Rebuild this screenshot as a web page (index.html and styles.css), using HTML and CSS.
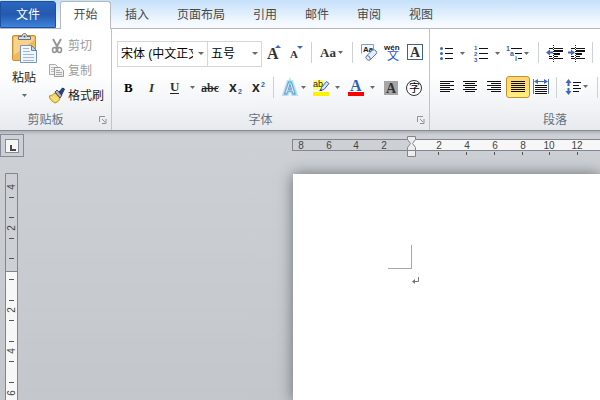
FILE: index.html
```html
<!DOCTYPE html>
<html lang="zh-CN">
<head>
<meta charset="utf-8">
<title>文档</title>
<link rel="stylesheet" href="styles.css">
</head>
<body>
<nav class="tabs">
  <button class="tab file">文件</button>
  <button class="tab active">开始</button>
  <button class="tab">插入</button>
  <button class="tab">页面布局</button>
  <button class="tab">引用</button>
  <button class="tab">邮件</button>
  <button class="tab">审阅</button>
  <button class="tab">视图</button>
</nav>

<div class="ribbon">
  <section class="group clipboard">
    <div class="clip-tools">
      <button class="paste">
        <svg width="28" height="31" viewBox="0 0 28 31">
          <rect x="2.500" y="2.500" width="23" height="25" rx="1.500" fill="#f0b95a" stroke="#c98f35"/>
          <path d="M4 4h20v3L4 22z" fill="#f8d28b"/>
          <path d="M8.500 6.500v-3h3.500c0-2 1-3 2.500-3s2.500 1 2.500 3h3.500v3z" fill="#d9dde2" stroke="#697079"/>
          <circle cx="14.500" cy="3.500" r="1" fill="#555"/>
          <path d="M10.500 12.500h11l5 5v12h-16z" fill="#f1f6fd" stroke="#7795bb"/>
          <path d="M21.500 12.500v5h5z" fill="#c5d7ee" stroke="#5c81b5"/>
          <path d="M13 15.500h6M13 18.500h7M13 21.500h11M13 24.500h11M13 27.500h11" stroke="#9db7d9"/>
        </svg>
        <span>粘贴</span>
        <svg class="drop" width="5" height="3" viewBox="0 0 5 3"><path d="M0 0h5l-2.500 3z"/></svg>
      </button>
      <div class="clip-list">
        <button class="line" disabled>
          <svg width="16" height="18" viewBox="0 0 16 18">
            <path d="M4 2l5 9M12 2L7 11" fill="none" stroke="#979797" stroke-width="2"/>
            <ellipse cx="5.500" cy="13" rx="2" ry="2.500" fill="none" stroke="#939393" stroke-width="1.500"/>
            <ellipse cx="10.500" cy="13" rx="2" ry="2.500" fill="none" stroke="#939393" stroke-width="1.500"/>
          </svg>剪切</button>
        <button class="line" disabled>
          <svg width="16" height="18" viewBox="0 0 16 18">
            <path d="M.5 2.500h6l2 2v8h-8z" fill="#f3f3f3" stroke="#aaa"/>
            <path d="M2 5.500h4M2 7.500h4M2 9.500h3" stroke="#bbb"/>
            <path d="M5.500 5.500h6l3 3v6h-9z" fill="#f0f0f0" stroke="#9a9a9a"/>
            <path d="M7 8.500h4M7 10.500h6M7 12.500h6" stroke="#aaa"/>
          </svg>复制</button>
        <button class="line">
          <svg width="16" height="18" viewBox="0 0 16 18">
            <path d="M0 9c3 0 4-2 6-3l5 5c-1 3-2 4-5 5-2-1-5-3-6-7z" fill="#f2d35e" stroke="#b6912e"/>
            <path d="M2 10l5 4M4 9l5 4" stroke="#fff2ad"/>
            <path d="M6 5l2-2 5 5-2 3z" fill="#a9b2c0" stroke="#4a5365"/>
            <path d="M10 5l3.500-4 2 1-3 6z" fill="#28458a" stroke="#263462"/>
          </svg>格式刷</button>
      </div>
    </div>
    <footer class="caption"><span>剪贴板</span>
      <button class="launcher" aria-label="剪贴板选项"><svg width="8" height="8" viewBox="0 0 8 8"><path d="M.5 6V.5H6M3 3l3 3M7 3v4.500H3" /></svg></button>
    </footer>
  </section>

  <section class="group font">
    <div class="rows">
      <div class="row">
        <span class="combo name"><select aria-label="字体"><option>宋体 (中文正文)</option></select></span>
        <span class="combo size"><select aria-label="字号"><option>五号</option></select></span>
        <button class="tool" aria-label="增大字体"><svg width="24" height="24" viewBox="0 0 24 24"><text class="serif s16" x="5" y="18">A</text><path class="blue" d="M13 7h6l-3-3z"/></svg></button>
        <button class="tool" aria-label="缩小字体"><svg width="20" height="24" viewBox="0 0 20 24"><text class="serif s11" x="4" y="17">A</text><path class="blue" d="M11 5h6l-3 3z"/></svg></button>
        <svg class="sep" width="9" height="24" viewBox="0 0 9 24"><path d="M5.500 1v21"/></svg>
        <button class="tool" aria-label="更改大小写"><svg width="33" height="24" viewBox="0 0 33 24"><text class="serif s13" x="5" y="16">Aa</text><path class="arrow" d="M23 10h5l-2.500 3z"/></svg></button>
        <svg class="sep" width="9" height="24" viewBox="0 0 9 24"><path d="M4.500 1v21"/></svg>
        <button class="tool" aria-label="清除格式"><svg width="24" height="24" viewBox="0 0 24 24"><path d="M4.500 12.500v-9h12v7" fill="#f3f7fc" stroke="#7c9fcb"/><text class="sans s8" x="6" y="11">Aa</text><path d="M9.500 15l6-6q2-1 3.500 1t0 3l-6 6q-2 1-3.500-1t0-3z" fill="#e5edf8" stroke="#58779f"/><path d="M10 14.500q3 0 3.500 4" fill="none" stroke="#58779f"/></svg></button>
        <button class="tool" aria-label="拼音指南"><svg width="23" height="24" viewBox="0 0 23 24"><text class="sans s8" x="3" y="9">wén</text><text class="cjk blue s12" x="6" y="19">文</text></svg></button>
        <button class="tool" aria-label="字符边框"><svg width="23" height="24" viewBox="0 0 23 24"><rect x="3.500" y="3.500" width="15" height="15" fill="#fff" stroke="#3f6284"/><text class="serif s14" x="6" y="16">A</text></svg></button>
      </div>
      <div class="row">
        <button class="tool" aria-label="加粗"><svg width="24" height="24" viewBox="0 0 24 24"><text class="serif black s13" x="8" y="16">B</text></svg></button>
        <button class="tool" aria-label="倾斜"><svg width="24" height="24" viewBox="0 0 24 24"><text class="serif italic s13" x="9" y="16">I</text></svg></button>
        <button class="tool" aria-label="下划线"><svg width="34" height="24" viewBox="0 0 34 24"><text class="serif s13" x="6" y="15">U</text><path d="M6 17.500h9" stroke="#222"/><path class="arrow" d="M26 10h5l-2.500 3z"/></svg></button>
        <button class="tool" aria-label="删除线"><svg width="24" height="24" viewBox="0 0 24 24"><text class="serif s12" x="3" y="16">abc</text><path d="M4 12.500h16" stroke="#222"/></svg></button>
        <button class="tool" aria-label="下标"><svg width="24" height="24" viewBox="0 0 24 24"><text class="sans s14" x="7" y="16">x</text><text class="sans blue s7" x="16" y="18">2</text></svg></button>
        <button class="tool" aria-label="上标"><svg width="24" height="24" viewBox="0 0 24 24"><text class="sans s14" x="6" y="16">x</text><text class="sans blue s7" x="15" y="11">2</text></svg></button>
        <svg class="sep" width="8" height="24" viewBox="0 0 8 24"><path d="M3.500 1v21"/></svg>
        <button class="tool" aria-label="文本效果"><svg width="31" height="24" viewBox="0 0 31 24"><text class="sans glow s16" x="6" y="18">A</text><text class="sans outline s16" x="6" y="18">A</text><path class="arrow" d="M23 10h5l-2.500 3z"/></svg></button>
        <button class="tool" aria-label="突出显示"><svg width="35" height="24" viewBox="0 0 35 24"><path d="M4 4h10v10H4z" fill="#ff6"/><path d="M4 16h16v4H4z" fill="#fff200"/><text class="sans thin s9" x="4" y="11">ab</text><path d="M11.500 14.500l1-3 5-6 2.500 2-5 6z" fill="#d8e4f4" stroke="#42628e"/><path d="M10 15h3l-1-2z" fill="#333"/><path class="arrow" d="M26 10h5l-2.500 3z"/></svg></button>
        <button class="tool" aria-label="字体颜色"><svg width="36" height="24" viewBox="0 0 36 24"><text class="serif blue s16" x="6" y="15">A</text><path d="M4 16h16v4H4z" fill="red"/><path class="arrow" d="M26 10h5l-2.500 3z"/></svg></button>
        <button class="tool" aria-label="字符底纹"><svg width="22" height="24" viewBox="0 0 22 24"><path d="M4 5h14v14H4z" fill="#a6a6a6"/><text class="serif s14" x="6" y="17">A</text></svg></button>
        <button class="tool" aria-label="带圈字符"><svg width="24" height="24" viewBox="0 0 24 24"><circle cx="12" cy="12" r="7.500" fill="#fff" stroke="#333"/><text class="cjk s11" x="7" y="16">字</text></svg></button>
      </div>
    </div>
    <footer class="caption"><span>字体</span>
      <button class="launcher" aria-label="字体选项"><svg width="8" height="8" viewBox="0 0 8 8"><path d="M.5 6V.5H6M3 3l3 3M7 3v4.500H3" /></svg></button>
    </footer>
  </section>

  <section class="group paragraph">
    <div class="rows">
      <div class="row">
        <button class="tool" aria-label="项目符号"><svg width="34" height="24" viewBox="0 0 34 24"><g class="blue"><circle cx="5.500" cy="7.500" r="1.500"/><circle cx="5.500" cy="12.500" r="1.500"/><circle cx="5.500" cy="17.500" r="1.500"/></g><path class="ink" d="M9 7.500h8M9 12.500h8M9 17.500h8"/><path class="arrow" d="M24 11h5l-2.500 3z"/></svg></button>
        <button class="tool" aria-label="编号"><svg width="34" height="24" viewBox="0 0 34 24"><g class="sans blue s6"><text x="4" y="9">1</text><text x="4" y="15">2</text><text x="4" y="21">3</text></g><path class="ink" d="M9 7.500h9M9 12.500h9M9 17.500h9"/><path class="arrow" d="M25 11h5l-2.500 3z"/></svg></button>
        <button class="tool" aria-label="多级列表"><svg width="30" height="24" viewBox="0 0 30 24"><g class="sans blue s7"><text x="2" y="10">1</text><text x="6" y="15">a</text><text x="11" y="20">i</text></g><path class="ink" d="M7 7.500h11M11 12.500h7M14 17.500h4"/><path class="arrow" d="M20 11h5l-2.500 3z"/></svg></button>
        <svg class="sep" width="10" height="24" viewBox="0 0 10 24"><path d="M4.500 1v21"/></svg>
        <button class="tool" aria-label="减少缩进"><svg width="22" height="24" viewBox="0 0 22 24"><path class="ink" d="M5 7.500h4M10 7.500h9M10 15.500h4M5 17.500h4M10 17.500h9M5 15.500h3"/><path d="M10 10h9M10 13h6" stroke="#111" stroke-width="2"/><path d="M9.500 4v17" stroke="#222" stroke-dasharray="1 1"/><path class="blue" d="M2 11.500l4-3v2h3v2H6v2z"/></svg></button>
        <button class="tool" aria-label="增加缩进"><svg width="22" height="24" viewBox="0 0 22 24"><path class="ink" d="M5 7.500h4M10 7.500h9M10 15.500h4M5 17.500h4M10 17.500h9M5 15.500h3"/><path d="M10 10h9M10 13h6" stroke="#111" stroke-width="2"/><path d="M9.500 4v17" stroke="#222" stroke-dasharray="1 1"/><path class="blue" d="M9 11.500l-4-3v2H2v2h3v2z"/></svg></button>
        <svg class="sep" width="8" height="24" viewBox="0 0 8 24"><path d="M4.500 1v21"/></svg>
      </div>
      <div class="row">
        <button class="tool" aria-label="左对齐"><svg width="24" height="24" viewBox="0 0 24 24"><path class="ink" d="M4 5.500h14M4 7.500h10M4 9.500h14M4 11.500h10M4 13.500h14M4 15.500h10"/></svg></button>
        <button class="tool" aria-label="居中"><svg width="24" height="24" viewBox="0 0 24 24"><path class="ink" d="M3 5.500h14M5 7.500h10M3 9.500h14M5 11.500h10M3 13.500h14M5 15.500h10"/></svg></button>
        <button class="tool" aria-label="右对齐"><svg width="22" height="24" viewBox="0 0 22 24"><path class="ink" d="M3 5.500h14M7 7.500h10M3 9.500h14M7 11.500h10M3 13.500h14M7 15.500h10"/></svg></button>
        <button class="tool on" aria-label="两端对齐" aria-pressed="true"><svg width="22" height="20" viewBox="0 0 22 20"><path class="ink" d="M4 4.500h14M4 6.500h14M4 8.500h14M4 10.500h14M4 12.500h14M4 14.500h14"/></svg></button>
        <button class="tool" aria-label="分散对齐"><svg width="22" height="24" viewBox="0 0 22 24"><path class="ink" d="M5 9.500h12M5 11.500h12M5 13.500h12M5 15.500h12M5 17.500h12"/><path d="M3.500 3v15M18.500 3v15" stroke="#5f7896"/><path d="M6 5.500h10" stroke="#3a63b0"/><path class="blue" d="M4 5.500L8 3v5zM18 5.500L14 3v5z"/></svg></button>
        <svg class="sep" width="10" height="24" viewBox="0 0 10 24"><path d="M4.500 1v21"/></svg>
        <button class="tool" aria-label="行距"><svg width="32" height="24" viewBox="0 0 32 24"><path class="blue" d="M6.500 3l3 4h-2v3h-2V7h-2zM6.500 19l3-4h-2v-3h-2v3h-2z"/><path class="ink" d="M11 6.500h8M11 9.500h6M11 12.500h8M11 15.500h6"/><path class="arrow" d="M21 9h5l-2.500 3z"/></svg></button>
        <svg class="sep" width="6" height="24" viewBox="0 0 6 24"><path d="M3.500 1v21"/></svg>
      </div>
    </div>
    <footer class="caption"><span>段落</span></footer>
  </section>
</div>

<main class="workspace">
  <aside class="side">
    <button class="tabstop" aria-label="制表符"><svg width="14" height="14" viewBox="0 0 14 14"><rect x=".5" y=".5" width="13" height="13" fill="#f7f7f7" stroke="#858c97"/><path d="M6 6v5h5" fill="none" stroke="#484848" stroke-width="2"/></svg></button>
    <svg class="vruler" width="13" height="228" viewBox="0 0 13 228">
      <path d="M0 0h13v98H0z" fill="#cdd1d6"/>
      <path d="M0 98h13v130H0z" fill="#f7f7f7"/>
      <path class="edge" d="M.5 228V.5h12V228M0 98.500h13"/>
      <path class="tick" d="M4 24.500h5M4 44.500h5M4 65.500h5M4 85.500h5M4 106.500h5M4 127.500h5M4 147.500h5M4 168.500h5M4 188.500h5M4 209.500h5"/>
      <g class="mark">
        <text transform="translate(10 14) rotate(-90)">4</text>
        <text transform="translate(10 55) rotate(-90)">2</text>
        <text transform="translate(10 137) rotate(-90)">2</text>
        <text transform="translate(10 178) rotate(-90)">4</text>
        <text transform="translate(10 220) rotate(-90)">6</text>
      </g>
    </svg>
  </aside>
  <div class="canvas">
    <svg class="hruler" height="21">
      <rect x="0" y="3" width="100%" height="12" fill="#f7f7f7"/>
      <path d="M0 3h119v12H0z" fill="#cdd1d6"/>
      <path class="edge" d="M.5 3v12"/>
      <line class="edge" x1="0" y1="3.500" x2="100%" y2="3.500"/>
      <line class="edge" x1="0" y1="14.500" x2="100%" y2="14.500"/>
      <g class="mark">
        <text x="9" y="13">8</text><text x="37" y="13">6</text><text x="64" y="13">4</text><text x="92" y="13">2</text>
        <text x="147" y="13">2</text><text x="175" y="13">4</text><text x="203" y="13">6</text><text x="231" y="13">8</text><text x="257" y="13">10</text><text x="285" y="13">12</text>
      </g>
      <path class="tick" d="M146.500 16v3M174.500 16v3M202.500 16v3M230.500 16v3M257.500 16v3M285.500 16v3"/>
      <path d="M115.500.5h8v3l-3 4 3 4v3h-8v-3l3-4-3-4z" fill="#ececec" stroke="#80858c"/>
      <path d="M115.500 14.500h8v6h-8z" fill="#eee" stroke="#80858c"/>
    </svg>
    <article class="page">
      <div class="corner"></div>
      <svg class="return" width="8" height="8" viewBox="0 0 8 8"><path d="M6.500 0v4.500H1" fill="none" stroke="#777"/><path d="M0 4.500L3 2v5z" fill="#777"/></svg>
    </article>
  </div>
</main>
</body>
</html>
```

FILE: styles.css
```css
* { box-sizing: border-box; }

body {
  margin: 0;
  min-height: 100vh;
  display: flex;
  flex-direction: column;
  overflow: hidden;
  background: #cdd1d6;
  color: #222;
  font: 12px/16px "Liberation Sans", "Noto Sans CJK SC", sans-serif;
}

button {
  margin: 0;
  padding: 0;
  border: 0;
  background: none;
  color: inherit;
  font: inherit;
}

svg { display: block; flex: none; }

/* Tab strip */
.tabs {
  display: flex;
  height: 29px;
  padding-top: 1px;
  border-bottom: 1px solid #b5b9be;
  background: linear-gradient(#c5e0f9, #f7fbff 90%);
}
.tab { padding: 0 14px; color: #484848; white-space: nowrap; }
.tab.file {
  width: 56px;
  margin-right: 4px;
  border: 1px solid #1f4f9f;
  border-radius: 0 3px 0 0;
  background: linear-gradient(#2b66bf, #2459ae 50%, #3f83dc);
  color: #fff;
}
.tab.active {
  width: 51px;
  height: 28px;
  padding: 0 12px 2px;
  border: 1px solid #b5b9be;
  border-bottom: 0;
  border-radius: 3px 3px 0 0;
  background: #fff;
}

/* Ribbon */
.ribbon {
  display: flex;
  height: 102px;
  border-bottom: 1px solid #878c93;
  background: linear-gradient(#fff 45%, #e7eaee);
}
.group {
  display: flex;
  flex-direction: column;
  justify-content: space-between;
  flex: none;
  border-right: 1px solid #c0c4c9;
}
.clipboard { width: 112px; }
.font { width: 318px; }
.paragraph { flex: 1 0 170px; border-right: 0; }

.caption {
  display: flex;
  align-items: center;
  height: 21px;
  padding-right: 4px;
  color: #66707f;
}
.caption span { flex: 1; padding-right: 8px; text-align: center; }
.paragraph .caption { padding: 0 0 0 88px; }
.launcher path { fill: none; stroke: #8b929b; }

.clip-tools { display: flex; padding: 4px 0 0 10px; }
.paste {
  display: flex;
  flex-direction: column;
  align-items: center;
  width: 28px;
}
.paste span { margin: 6px 0 8px; }
.drop, .arrow { fill: #686868; }
.clip-list { padding: 0 0 0 11px; }
.line { display: flex; align-items: center; gap: 3px; height: 25px; }
.line:disabled { color: #9c9c9c; }

.rows {
  display: flex;
  flex-direction: column;
  gap: 9px;
  padding: 12px 0 0 5px;
}
.paragraph .rows { padding-left: 6px; }
.row { display: flex; align-items: flex-start; height: 26px; }
.font .row + .row { margin-left: -1px; }

.combo { position: relative; display: flex; height: 26px; }
.combo.name { width: 91px; }
.combo.size { width: 55px; margin-left: -1px; }
.combo::after {
  content: "";
  position: absolute;
  top: 11px;
  right: 4px;
  border: 3px solid transparent;
  border-top-color: #686868;
  border-bottom: 0;
  pointer-events: none;
}
select {
  width: 100%;
  padding: 0 14px 0 3px;
  border: 1px solid #d3d6da;
  border-radius: 0;
  appearance: none;
  background: #fff;
  color: #000;
  font: inherit;
}

.tool.on {
  border: 1px solid #c29228;
  border-radius: 3px;
  background: linear-gradient(#ffd477, #ffdf70 60%, #fff083);
}
.sep path { stroke: #cdd0d5; }
.blue { fill: #3c68b8; }
.ink { stroke: #111; }
.serif { font-family: "Liberation Serif", serif; font-weight: bold; fill: #333; }
.sans { font-family: "Liberation Sans", sans-serif; font-weight: bold; fill: #222; }
.cjk { font-family: "Noto Sans CJK SC", sans-serif; }
.thin { font-weight: normal; }
.italic { font-style: italic; }
.black { fill: #000; }
.serif.blue, .sans.blue { fill: #2f5fb8; }
.cjk.blue { fill: #2a57d0; }
.glow { fill: none; stroke: #b5dff5; stroke-width: 4px; }
.outline { fill: #fff; stroke: #559bd0; stroke-width: 1px; }
.s6 { font-size: 6px; }
.s7 { font-size: 7px; }
.s8 { font-size: 8px; }
.s9 { font-size: 9px; }
.s11 { font-size: 11px; }
.s12 { font-size: 12px; }
.s13 { font-size: 13px; }
.s14 { font-size: 14px; }
.s16 { font-size: 16px; }

/* Document area */
.workspace {
  flex: 1;
  display: flex;
  overflow: hidden;
  background: linear-gradient(#adb0b5, #cdd1d6 4px, #c3c7cc);
}
.side { width: 24px; padding-top: 3px; }
.tabstop {
  display: flex;
  align-items: center;
  justify-content: center;
  width: 24px;
  height: 23px;
  border: 1px solid #858c97;
}
.vruler { margin: 16px 0 0 5px; }
.canvas {
  flex: 1;
  display: flex;
  flex-direction: column;
  padding: 5px 0 0 268px;
}
.hruler { width: 100%; }
.edge { fill: none; stroke: #80858f; }
.tick { stroke: #555; }
.mark { font-size: 10px; fill: #444; text-anchor: middle; }
.page {
  flex: 1;
  margin: 17px 0 0 1px;
  padding: 71px 95px 0;
  background: #fff;
  box-shadow: 0 0 14px rgba(40, 45, 50, 0.6);
}
.corner {
  width: 24px;
  height: 24px;
  border: solid #a8a8a8;
  border-width: 0 1px 1px 0;
}
.return { margin: 8px 0 0 24px; }
```
